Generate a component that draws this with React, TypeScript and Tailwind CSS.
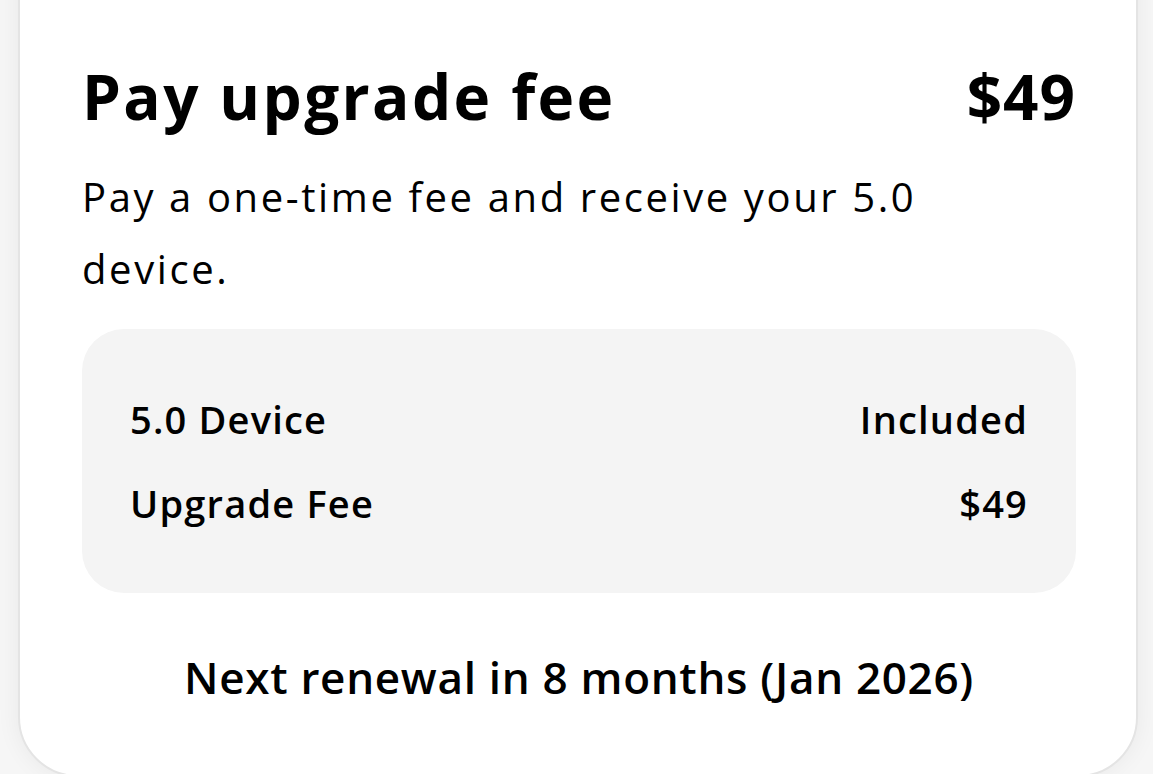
import React from "react";

export default function App() {
  return (
    <div
      className="w-[1153px] h-[774px] overflow-hidden bg-[#f6f6f6] pl-[18px] pr-[15px]"
      style={{ fontFamily: "'Open Sans', sans-serif" }}
    >
      <div className="-mt-[80px] h-[857px] rounded-[60px] border-2 border-[#e4e4e4] bg-white pl-[62px] pr-[60px] pt-[134px] text-black shadow-[0_0_24px_rgba(0,0,0,0.06)]">
        <div className="flex items-baseline justify-between">
          <h1 className="text-[62px] font-bold leading-[80px] tracking-[2.4px]">Pay upgrade fee</h1>
          <div className="text-[62px] font-bold leading-[80px] tracking-[1px]">$49</div>
        </div>
        <p className="mt-[25px] text-[40px] leading-[72px] font-normal tracking-[2.6px] pr-[60px]">
          Pay a one-time fee and receive your 5.0 device.
        </p>
        <div className="mt-[24px] rounded-[42px] bg-[#f4f4f4] px-[48px] pt-[70px] pb-[70px]">
          <div className="flex justify-between text-[38px] font-semibold leading-[40px] tracking-[1.2px]">
            <span>5.0 Device</span>
            <span>Included</span>
          </div>
          <div className="mt-[44px] flex justify-between text-[38px] font-semibold leading-[40px] tracking-[1.2px]">
            <span>Upgrade Fee</span>
            <span>$49</span>
          </div>
        </div>
        <div className="mt-[59px] text-center text-[44px] font-semibold leading-[50px] tracking-[0.7px]">
          Next renewal in 8 months (Jan 2026)
        </div>
      </div>
    </div>
  );
}
